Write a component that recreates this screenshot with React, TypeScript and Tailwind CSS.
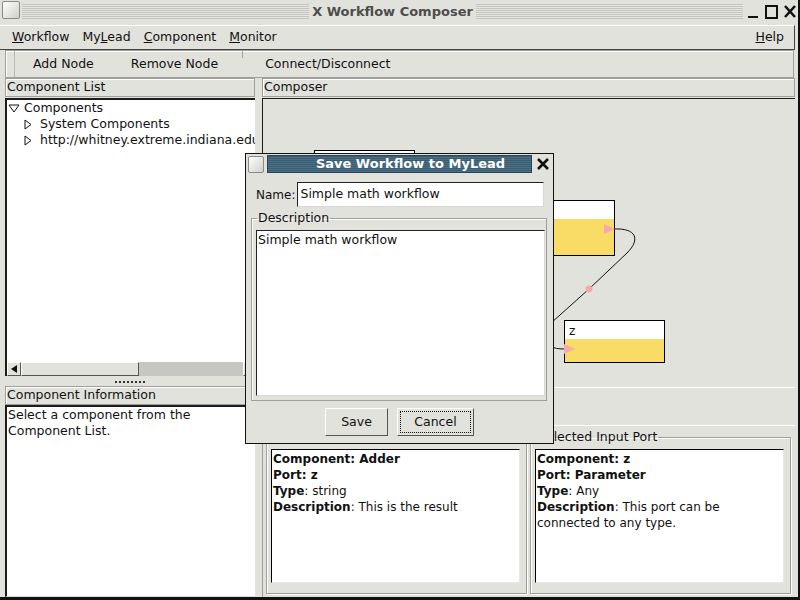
import React from 'react';

const stripesGrey =
  'bg-[repeating-linear-gradient(180deg,#c4c4c0_0px,#c4c4c0_1px,#e4e4e0_1px,#e4e4e0_2px)]';

function TitleButtons() {
  return (
    <svg width="52" height="16" viewBox="0 0 52 16" className="mt-[3px]">
      <rect x="3" y="12" width="10" height="2" fill="#111" />
      <rect x="21" y="2" width="11" height="12" fill="none" stroke="#111" strokeWidth="2" />
      <path d="M40 2 L50 13 M50 2 L40 13" stroke="#111" strokeWidth="2.6" />
    </svg>
  );
}

function TreeTriangle({ open }: { open?: boolean }) {
  return open ? (
    <svg width="12" height="9" viewBox="0 0 12 9" className="shrink-0">
      <path d="M1 1 L11 1 L6 8 Z" fill="none" stroke="#111" strokeWidth="1" />
    </svg>
  ) : (
    <svg width="8" height="11" viewBox="0 0 8 11" className="shrink-0">
      <path d="M1 1 L7 5.5 L1 10 Z" fill="none" stroke="#111" strokeWidth="1" />
    </svg>
  );
}

function Node({
  left,
  top,
  h,
  label,
}: {
  left: number;
  top: number;
  h: number;
  label?: string;
}) {
  return (
    <div
      className="absolute w-[101px] border border-black bg-[#f9dc66] flex flex-col"
      style={{ left, top, height: h }}
    >
      <div className="h-[18px] bg-white px-[4px] leading-[20px] text-[12px]">{label}</div>
    </div>
  );
}

function Canvas() {
  return (
    <div className="relative h-[290px] border-t border-l border-[#1c1c1c] border-b border-b-white overflow-hidden">
      <Node left={51} top={51} h={43} />
      <Node left={251} top={101} h={56} />
      <Node left={301} top={221} h={43} label="z" />
      <svg className="absolute inset-0" width="531" height="288" viewBox="0 0 531 288">
        <path
          d="M351 130 C373 129 378 140 364 154 L326 190 L288 224 C280 236 278 250 301 250"
          fill="none"
          stroke="#111"
          strokeWidth="1"
        />
        <circle cx="326" cy="190" r="3.5" fill="#f7a9b0" />
        <polygon points="341,125 352,130 341,135" fill="#f7a9b0" />
        <polygon points="301,245 312,250 301,255" fill="#f7a9b0" />
      </svg>
    </div>
  );
}

function InfoFrame({ title, children }: { title: string; children: React.ReactNode }) {
  return (
    <fieldset className="w-[261px] shrink-0 border border-[#a09f9b] shadow-[inset_1px_1px_0_#fff,1px_1px_0_#fff] pl-[4px] pr-[6px] pb-[6px] pt-[5px] min-w-0">
      <legend className="ml-[2px] px-[1px] leading-[14px] text-[12.5px]">{title}</legend>
      <div className="h-[134px] bg-white border-t border-l border-black border-r border-b border-r-[#e8e8e4] border-b-[#e8e8e4] px-[1px] pt-[1px] leading-[16px] text-[12px]">
        {children}
      </div>
    </fieldset>
  );
}

function SaveDialog() {
  return (
    <div className="absolute left-[245px] top-[153px] w-[309px] h-[291px] border border-[#111] bg-[#e2e2dd] flex flex-col">
      <div className="h-[20px] flex items-center pl-[2px] pr-[2px] gap-[3px]">
        <div className="w-[16px] h-[17px] border border-[#8a8a86] rounded-[2px] bg-gradient-to-br from-white to-[#cfcfcb]" />
        <div className="flex-1 h-[18px] bg-[repeating-linear-gradient(180deg,#3a5d72_0px,#3a5d72_1px,#4b6f84_1px,#4b6f84_2px)] flex items-center justify-center pl-[22px] border border-[#2a4454]">
          <span className="text-white font-bold text-[13px] leading-[16px]">Save Workflow to MyLead</span>
        </div>
        <svg width="16" height="16" viewBox="0 0 16 16">
          <path d="M3 3 L13 13 M13 3 L3 13" stroke="#111" strokeWidth="2.6" />
        </svg>
      </div>
      <div className="mt-[8px] h-[25px] flex items-center pl-[10px] pr-[9px] gap-[2px]">
        <span className="text-[12px]">Name:</span>
        <div className="flex-1 h-[25px] bg-white border border-t-[#222] border-l-[#222] border-r-[#d8d8d4] border-b-[#d8d8d4] px-[2px] flex items-center">
          Simple math workflow
        </div>
      </div>
      <fieldset className="mt-[4px] ml-[5px] mr-[6px] h-[190px] border border-[#a09f9b] shadow-[inset_1px_1px_0_#fff] pl-[4px] pr-[1px] pb-[3px] pt-[5px]">
        <legend className="ml-[1px] px-[1px] leading-[14px]">Description</legend>
        <div className="h-[166px] bg-white border border-t-[#222] border-l-[#222] border-r-[#d8d8d4] border-b-[#d8d8d4] px-[1px] pt-[1px] leading-[16px]">
          Simple math workflow
        </div>
      </fieldset>
      <div className="mt-[7px] flex justify-center gap-[9px]">
        <div className="w-[63px] h-[28px] border border-t-white border-l-white border-r-[#555] border-b-[#555] flex items-center justify-center">
          Save
        </div>
        <div className="w-[77px] h-[28px] border border-t-white border-l-white border-r-[#555] border-b-[#555] p-[2px]">
          <div className="h-full border border-dotted border-[#111] flex items-center justify-center">Cancel</div>
        </div>
      </div>
    </div>
  );
}

export default function App() {
  return (
    <div className="relative w-[800px] h-[600px] bg-[#e2e2dd] border-r-2 border-b-[3px] border-[#111] flex flex-col overflow-hidden font-['DejaVu_Sans',sans-serif] text-[12.5px] text-[#111]">
      {/* window title */}
      <div className="h-[25px] flex items-start pt-[1px] pl-[2px] pr-[1px] gap-[2px]">
        <div className="w-[18px] h-[18px] border border-[#8a8a86] rounded-[2px] bg-gradient-to-br from-white to-[#cfcfcb]" />
        <div className={`flex-1 h-[15px] mt-[3px] ${stripesGrey} flex items-center justify-center pl-[20px]`}>
          <span className="px-[3px] bg-[#e2e2dd] font-bold text-[13px] leading-[15px] text-[#4d4d4d]">
            X Workflow Composer
          </span>
        </div>
        <TitleButtons />
      </div>

      {/* menubar */}
      <div className="h-[25px] border-t border-t-white border-b border-b-[#444] border-r border-r-[#444] mr-[3px] flex items-center pl-[12px] pr-[10px]">
        <div className="flex gap-[13px]">
          <span><u>W</u>orkflow</span>
          <span>My<u>L</u>ead</span>
          <span><u>C</u>omponent</span>
          <span><u>M</u>onitor</span>
        </div>
        <span className="ml-auto"><u>H</u>elp</span>
      </div>

      {/* toolbar */}
      <div className="h-[28px] pl-[5px] pr-[4px]">
        <div className="h-full border border-[#a09f9b] shadow-[inset_1px_1px_0_#fff] flex items-center">
          <div className="w-[9px] h-full border-r border-[#b8b8b4]" />
          <span className="ml-[18px]">Add Node</span>
          <span className="ml-[37px]">Remove Node</span>
          <div className="ml-[24px] self-start w-px h-[7px] bg-[#a09f9b]" />
          <span className="ml-[22px]">Connect/Disconnect</span>
        </div>
      </div>

      {/* panel headers */}
      <div className="h-[20px] flex pl-[5px] pr-[3px] gap-[7px]">
        <div className="w-[250px] h-[19px] border border-[#a09f9b] shadow-[inset_1px_1px_0_#fff] px-[1px] flex items-center">
          Component List
        </div>
        <div className="flex-1 h-[19px] border border-[#a09f9b] shadow-[inset_1px_1px_0_#fff] px-[1px] flex items-center">
          Composer
        </div>
      </div>

      {/* main area */}
      <div className="flex-1 flex pl-[5px] pr-[3px] gap-[7px] min-h-0">
        <div className="w-[250px] flex flex-col">
          <div className="h-[264px] bg-white border-t-2 border-l-2 border-[#1c1c1c] overflow-hidden leading-[16px] whitespace-nowrap">
            <div className="flex items-center gap-[4px] pl-[1px]">
              <TreeTriangle open />
              <span>Components</span>
            </div>
            <div className="flex items-center gap-[8px] pl-[17px]">
              <TreeTriangle />
              <span>System Components</span>
            </div>
            <div className="flex items-center gap-[8px] pl-[17px]">
              <TreeTriangle />
              <span>http://whitney.extreme.indiana.edu</span>
            </div>
          </div>
          <div className="h-[14px] flex bg-[#c6c6c2] border-l-2 border-[#1c1c1c]">
            <div className="w-[14px] h-full border border-t-white border-l-white border-r-[#555] border-b-[#555] bg-[#e2e2dd] flex items-center justify-center">
              <svg width="6" height="8" viewBox="0 0 6 8">
                <path d="M6 0 L0 4 L6 8 Z" fill="#111" />
              </svg>
            </div>
            <div className="w-[118px] h-full border border-t-white border-l-white border-r-[#555] border-b-[#555] bg-[#e2e2dd]" />
            <div className="ml-auto w-[12px] h-full border border-t-white border-l-white border-r-[#555] border-b-[#555] bg-[#e2e2dd]" />
          </div>
          <div className="h-[10px] flex items-center justify-center">
            <div className="w-[30px] h-[2px] mt-[1px] bg-[repeating-linear-gradient(90deg,#333_0px,#333_2px,transparent_2px,transparent_4px)]" />
          </div>
          <div className="h-[19px] border border-[#a09f9b] shadow-[inset_1px_1px_0_#fff] px-[1px] flex items-center">
            Component Information
          </div>
          <div className="flex-1 bg-white border-t-2 border-l-2 border-[#1c1c1c] border-b border-b-[#d8d8d4] px-[1px] leading-[16px]">
            Select a component from the
            <br />
            Component List.
          </div>
        </div>

        <div className="flex-1 flex flex-col min-w-0">
          <Canvas />
          <div className="h-[37px]" />
          <div className="flex-1 border-t border-white border-l border-l-[#a09f9b] flex gap-[3px] pl-[3px] pr-[5px] pt-[4px] pb-[3px]">
            <InfoFrame title="Selected Output Port">
              <b>Component: Adder</b>
              <br />
              <b>Port: z</b>
              <br />
              <b>Type</b>: string
              <br />
              <b>Description</b>: This is the result
            </InfoFrame>
            <InfoFrame title="Selected Input Port">
              <b>Component: z</b>
              <br />
              <b>Port: Parameter</b>
              <br />
              <b>Type</b>: Any
              <br />
              <b>Description</b>: This port can be
              <br />
              connected to any type.
            </InfoFrame>
          </div>
        </div>
      </div>

      <SaveDialog />
    </div>
  );
}
